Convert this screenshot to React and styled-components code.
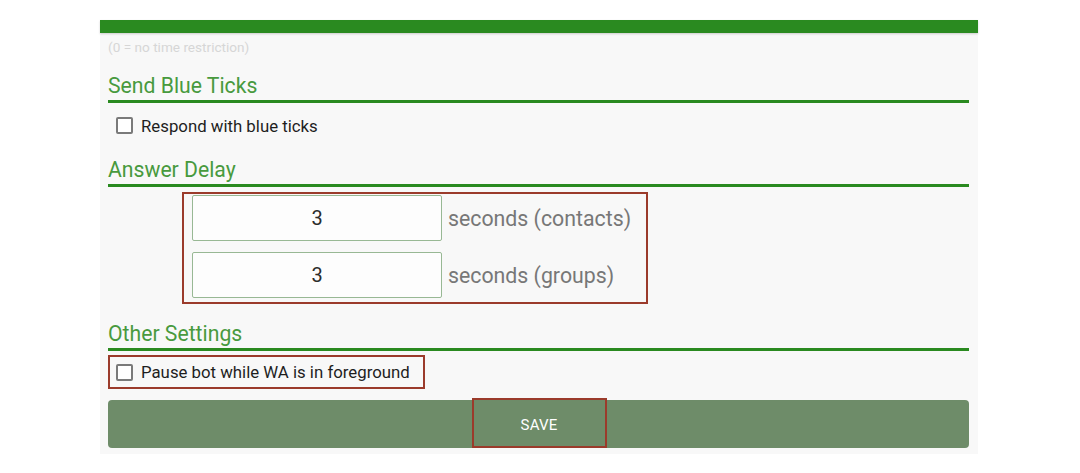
import React from "react";
import styled, { createGlobalStyle } from "styled-components";

const Global = createGlobalStyle`
  html, body { margin: 0; padding: 0; background: #ffffff; }
  body { font-family: Roboto, "Noto Sans", "Liberation Sans", sans-serif; }
  * { box-sizing: border-box; }
`;

const Page = styled.div`
  padding-top: 20px;
  padding-left: 100px;
  width: 1080px;
  height: 473px;
`;

const Panel = styled.div`
  width: 878px;
  background: #f8f8f8;
  padding-bottom: 6px;
`;

const TopBar = styled.div`
  height: 13px;
  background: #2a8a20;
  box-shadow: 0 1px 2px rgba(0, 0, 0, 0.18);
`;

const Content = styled.div`
  padding: 0 9px 0 8px;
  display: flex;
  flex-direction: column;
`;

const Hint = styled.div`
  margin-top: 5px;
  font-size: 13.6px;
  line-height: 18px;
  color: #d6d6d6;
`;

const SectionTitle = styled.div`
  margin-top: ${(p) => p.$gap}px;
  font-size: 21.2px;
  line-height: 24px;
  color: #489a3e;
  padding-bottom: 2px;
  border-bottom: 3px solid #2a8a20;
`;

const CheckRow = styled.label`
  display: flex;
  align-items: center;
  gap: 8px;
  height: ${(p) => p.$h}px;
  padding-left: ${(p) => p.$pl}px;
  font-size: 16.8px;
  color: #1e1e1e;
`;

const Box = styled.span`
  width: 17px;
  height: 17px;
  border: 2px solid #7a7a7a;
  border-radius: 2px;
  background: #ffffff;
  flex: none;
`;

const Highlight = styled.div`
  border: 2px solid #9b3b2b;
  align-self: flex-start;
  margin-left: ${(p) => p.$ml || 0}px;
  margin-top: ${(p) => p.$mt || 0}px;
`;

const DelayGroup = styled(Highlight)`
  width: 466px;
  padding: 1px 8px 4px 8px;
  display: flex;
  flex-direction: column;
  gap: 11px;
`;

const DelayRow = styled.div`
  display: flex;
  align-items: center;
  gap: 6px;
`;

const NumberField = styled.div`
  width: 250px;
  height: 46px;
  border: 1px solid #98b894;
  border-radius: 2px;
  background: #fdfdfd;
  display: flex;
  align-items: center;
  justify-content: center;
  font-size: 20px;
  color: #2c2c2c;
`;

const Unit = styled.span`
  font-size: 21.3px;
  color: #777777;
`;

const PauseBox = styled(Highlight)`
  width: 317px;
`;

const SaveButton = styled.div`
  margin-top: 11px;
  height: 48px;
  border-radius: 4px;
  background: #6e8c69;
  display: flex;
  justify-content: center;
  align-items: stretch;
`;

const SaveLabel = styled.span`
  margin-top: -2px;
  width: 135px;
  margin-left: 1px;
  border: 2px solid #9b3b2b;
  display: flex;
  align-items: center;
  justify-content: center;
  padding-top: 3px;
  font-size: 15px;
  color: #ffffff;
  letter-spacing: 0.2px;
`;

export default function App() {
  return (
    <>
      <Global />
      <Page>
        <Panel>
          <TopBar />
          <Content>
            <Hint>(0 = no time restriction)</Hint>
            <SectionTitle $gap={18}>Send Blue Ticks</SectionTitle>
            <CheckRow $h={45} $pl={8}>
              <Box />
              Respond with blue ticks
            </CheckRow>
            <SectionTitle $gap={10}>Answer Delay</SectionTitle>
            <DelayGroup $ml={74} $mt={5}>
              <DelayRow>
                <NumberField>3</NumberField>
                <Unit>seconds (contacts)</Unit>
              </DelayRow>
              <DelayRow>
                <NumberField>3</NumberField>
                <Unit>seconds (groups)</Unit>
              </DelayRow>
            </DelayGroup>
            <SectionTitle $gap={18}>Other Settings</SectionTitle>
            <PauseBox $mt={4}>
              <CheckRow $h={30} $pl={6}>
                <Box />
                Pause bot while WA is in foreground
              </CheckRow>
            </PauseBox>
            <SaveButton>
              <SaveLabel>SAVE</SaveLabel>
            </SaveButton>
          </Content>
        </Panel>
      </Page>
    </>
  );
}
